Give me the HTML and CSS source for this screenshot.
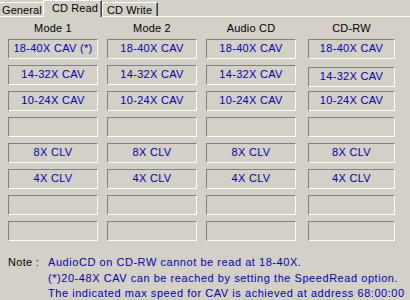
FILE: index.html
```html
<!DOCTYPE html>
<html>
<head>
<meta charset="utf-8">
<link rel="stylesheet" href="styles.css">
</head>
<body>
<div class="tabs">
  <div class="tab first">General</div>
  <div class="tab active">CD Read</div>
  <div class="tab last">CD Write</div>
</div>
<div class="panel">
  <div class="grid">
    <div class="col">
      <div class="head">Mode 1</div>
      <div class="box">18-40X CAV (*)</div>
      <div class="box">14-32X CAV</div>
      <div class="box">10-24X CAV</div>
      <div class="box"></div>
      <div class="box">8X CLV</div>
      <div class="box">4X CLV</div>
      <div class="box"></div>
      <div class="box"></div>
    </div>
    <div class="col">
      <div class="head">Mode 2</div>
      <div class="box">18-40X CAV</div>
      <div class="box">14-32X CAV</div>
      <div class="box">10-24X CAV</div>
      <div class="box"></div>
      <div class="box">8X CLV</div>
      <div class="box">4X CLV</div>
      <div class="box"></div>
      <div class="box"></div>
    </div>
    <div class="col">
      <div class="head">Audio CD</div>
      <div class="box">18-40X CAV</div>
      <div class="box">14-32X CAV</div>
      <div class="box">10-24X CAV</div>
      <div class="box"></div>
      <div class="box">8X CLV</div>
      <div class="box">4X CLV</div>
      <div class="box"></div>
      <div class="box"></div>
    </div>
    <div class="col last-col">
      <div class="head">CD-RW</div>
      <div class="box">18-40X CAV</div>
      <div class="box shift">14-32X CAV</div>
      <div class="box">10-24X CAV</div>
      <div class="box"></div>
      <div class="box">8X CLV</div>
      <div class="box">4X CLV</div>
      <div class="box"></div>
      <div class="box"></div>
    </div>
  </div>
  <div class="note">
    <div class="note-label">Note :</div>
    <div class="note-text">
      <div>AudioCD on CD-RW cannot be read at 18-40X.</div>
      <div>(*)20-48X CAV can be reached by setting the SpeedRead option.</div>
      <div>The indicated max speed for CAV is achieved at address 68:00:00</div>
    </div>
  </div>
</div>
</body>
</html>
```

FILE: styles.css
```css
html, body {
  margin: 0;
  padding: 0;
  background: #d4d0c8;
  width: 410px;
  height: 300px;
  overflow: hidden;
  font-family: "Liberation Sans", Arial, sans-serif;
  font-size: 11px;
  color: #000;
}

.tabs {
  display: flex;
  align-items: flex-end;
  height: 16px;
  position: relative;
  z-index: 1;
}

.tab {
  height: 14px;
  line-height: 14px;
  box-sizing: border-box;
  border-top: 1px solid #fff;
  border-left: 1px solid #fff;
  border-right: 1px solid #404040;
  padding: 0 5px;
  white-space: nowrap;
  letter-spacing: 0.1px;
}

.tab.first {
  border-left: none;
  padding-left: 2px;
  width: 43px;
  border-right: none;
}

.tab.active {
  height: 17px;
  margin-bottom: -1px;
  background: #d4d0c8;
  width: 59px;
  padding-left: 8px;
  line-height: 15px;
  border-right: 1px solid #404040;
  box-shadow: inset -1px 0 0 #808080;
}

.tab.last {
  width: 56px;
  padding-left: 4px;
  box-shadow: inset -1px 0 0 #808080;
}

.panel {
  border-top: 1px solid #fff;
}

.grid {
  display: grid;
  grid-template-columns: 90px 90px 90px 90px;
  column-gap: 9px;
  padding-left: 8px;
}

.last-col {
  margin-left: 3px;
}

.col {
  display: flex;
  flex-direction: column;
  gap: 6px;
}

.head {
  height: 16px;
  line-height: 14px;
  padding-top: 4px;
  text-align: center;
  margin-bottom: -4px;
  letter-spacing: 0.2px;
}

.box {
  height: 20px;
  box-sizing: border-box;
  border-top: 1px solid #808080;
  border-left: 1px solid #808080;
  border-bottom: 1px solid #fff;
  border-right: 1px solid #fff;
  color: #0000a8;
  text-align: center;
  line-height: 17px;
  letter-spacing: 0.3px;
}

.box.shift {
  position: relative;
  top: 2px;
}

.note {
  display: flex;
  padding-left: 8px;
  margin-top: 14px;
  line-height: 15.5px;
}

.note-label {
  width: 40px;
  letter-spacing: 0.3px;
}

.note-text {
  color: #0000a8;
  letter-spacing: 0.55px;
  white-space: nowrap;
}
```
